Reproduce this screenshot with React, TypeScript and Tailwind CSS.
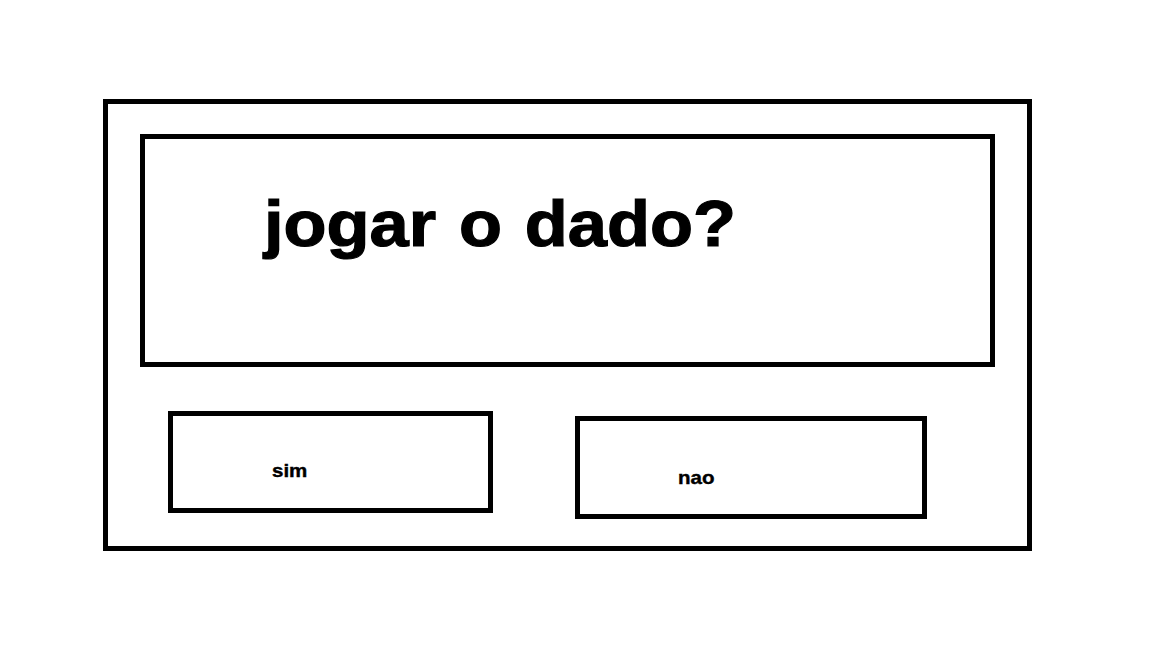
export default function App() {
  const font = { fontFamily: '"Liberation Sans", Arial, sans-serif' };
  return (
    <div className="w-[1152px] h-[648px] bg-white overflow-hidden" style={font}>
      <div className="ml-[103px] mt-[99px] w-[929px] h-[452px] border-[5px] border-black pt-[30px] px-[32px] box-border">
        <div className="w-[855px] h-[233px] border-[5px] border-black box-border pt-[53px] pl-[119px]">
          <div className="text-[64px] leading-none font-bold text-black origin-left scale-x-[1.1] whitespace-nowrap [word-spacing:3px] [-webkit-text-stroke:1.2px_black]">
            jogar o dado?
          </div>
        </div>
        <div className="flex items-start mt-[44px]">
          <div className="ml-[28px] w-[325px] h-[102px] border-[5px] border-black box-border pt-[45px] pl-[99px]">
            <span className="text-[19px] leading-none font-bold text-black block origin-left scale-x-[1.08] [-webkit-text-stroke:0.4px_black]">sim</span>
          </div>
          <div className="ml-[82px] mt-[5px] w-[352px] h-[103px] border-[5px] border-black box-border pt-[47px] pl-[98px]">
            <span className="text-[19px] leading-none font-bold text-black block origin-left scale-x-[1.08] [-webkit-text-stroke:0.4px_black]">nao</span>
          </div>
        </div>
      </div>
    </div>
  );
}
